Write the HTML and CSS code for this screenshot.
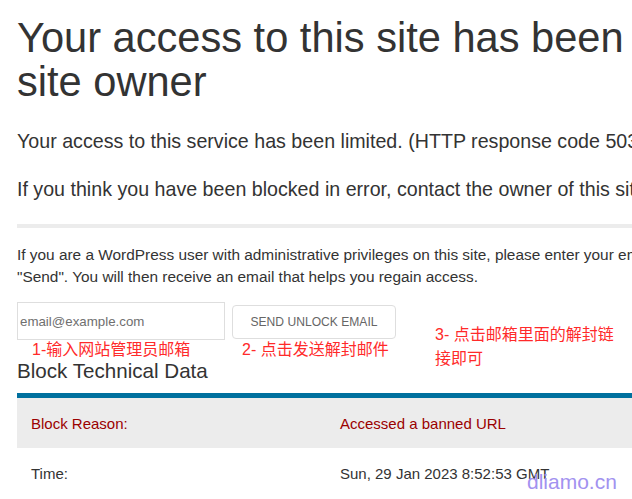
FILE: index.html
```html
<!DOCTYPE html>
<html lang="en">
<head>
    <meta charset="UTF-8">
    <meta name="viewport" content="width=device-width, initial-scale=1.0">
    <title>Access blocked</title>
    <link rel="stylesheet" href="styles.css">
</head>
<body>
    <div class="page">
        <h1 class="title">Your access to this site has been blocked by the site owner</h1>
        <p class="lead">Your access to this service has been limited. (HTTP response code 503)</p>
        <p class="lead">If you think you have been blocked in error, contact the owner of this site for assistance.</p>
        <hr class="divider">

        <p class="note">If you are a WordPress user with administrative privileges on this site, please enter your email address in the box below and click "Send". You will then receive an email that helps you regain access.</p>
        <form class="unlock">
            <input class="email" type="email" placeholder="email@example.com">
            <button class="send" type="button">Send Unlock Email</button>
        </form>

        <h2 class="section">Block Technical Data</h2>
        <table class="data">
            <tr class="reason">
                <th>Block Reason:</th>
                <td>Accessed a banned URL</td>
            </tr>
            <tr>
                <th>Time:</th>
                <td>Sun, 29 Jan 2023 8:52:53 GMT</td>
            </tr>
        </table>

        <!-- annotations drawn over the screenshot -->
        <span class="mark step1">1-输入网站管理员邮箱</span>
        <span class="mark step2">2- 点击发送解封邮件</span>
        <span class="mark step3">3- 点击邮箱里面的解封链接即可</span>
        <span class="watermark">dliamo.cn</span>
    </div>
</body>
</html>
```

FILE: styles.css
```css
html, body {
    margin: 0;
    overflow: hidden;
    background-color: #fff;
}
body {
    font-family: 'Liberation Sans', Arial, sans-serif;
    color: #333;
}
.page {
    position: relative;
    width: 920px;
    padding: 16px 0 0 17px;
}
.title {
    margin: 0 0 24px;
    font-size: 41.6px;
    line-height: 44px;
    font-weight: normal;
}
.lead {
    margin: 22px 0;
    font-size: 19.65px;
    line-height: 26px;
}
.divider {
    height: 4px;
    margin: 21px 0 0;
    border: 0;
    background-color: #ececec;
}
.note {
    margin: 16px 0 0;
    font-size: 15.4px;
    line-height: 22px;
}
.unlock {
    display: flex;
    align-items: center;
    gap: 7px;
    margin-top: 14px;
}
.email {
    box-sizing: border-box;
    width: 208px;
    height: 38px;
    margin: 0;
    padding: 0 2px;
    border: 1px solid #dedede;
    font-family: 'Liberation Sans', Arial, sans-serif;
    font-size: 13.3px;
    color: #333;
    outline: none;
}
.email::placeholder {
    color: #6f6f6f;
}
.send {
    box-sizing: border-box;
    width: 164px;
    height: 34px;
    margin-top: 2px;
    padding: 0;
    border: 1px solid #dedede;
    border-radius: 4px;
    background-color: #fff;
    font-family: 'Liberation Sans', Arial, sans-serif;
    font-size: 12.1px;
    color: #666;
    text-transform: uppercase;
}
.section {
    margin: 19px 0 10px;
    font-size: 20.6px;
    line-height: 24px;
    font-weight: normal;
}
.data {
    width: 100%;
    table-layout: fixed;
    border-collapse: collapse;
    border-top: 5px solid #00709e;
    font-size: 15px;
    line-height: 20px;
}
.data th,
.data td {
    padding: 16px 14px 14px;
    text-align: left;
    font-weight: normal;
    vertical-align: top;
}
.data th {
    width: 281px;
}
.data .reason {
    background-color: #ececec;
    color: #9b0000;
}
.mark {
    position: absolute;
    font-family: 'Liberation Sans', 'Noto Sans CJK SC', sans-serif;
    font-size: 16px;
    line-height: 24px;
    color: #ff2a2a;
}
.step1 {
    left: 32px;
    top: 338px;
}
.step2 {
    left: 242px;
    top: 338px;
}
.step3 {
    left: 435px;
    top: 323px;
    width: 185px;
}
.watermark {
    position: absolute;
    left: 527px;
    top: 470px;
    font-size: 21px;
    line-height: 24px;
    color: #a292f0;
}
```
